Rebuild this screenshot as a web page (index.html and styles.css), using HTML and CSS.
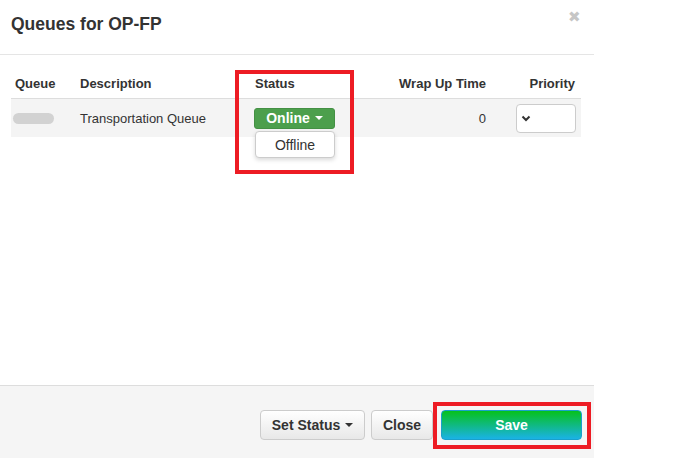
FILE: index.html
```html
<!DOCTYPE html>
<html>
<head>
<meta charset="utf-8">
<link rel="stylesheet" href="styles.css">
</head>
<body>
<div class="modal">
  <div class="modal-header">
    <h4 class="title">Queues for OP-FP</h4>
    <span class="close-x">&#x2716;</span>
  </div>
  <div class="modal-body">
    <div class="grid head">
      <div class="c c1">Queue</div>
      <div class="c c2">Description</div>
      <div class="c c3">Status</div>
      <div class="c c4">Wrap Up Time</div>
      <div class="c c5">Priority</div>
    </div>
    <div class="grid row">
      <div class="c c1"><span class="pill"></span></div>
      <div class="c c2">Transportation Queue</div>
      <div class="c c3 status-cell">
        <span class="btn-online">Online <span class="caret white"></span></span>
        <div class="dropdown">Offline</div>
        <div class="hl hl-status"></div>
      </div>
      <div class="c c4">0</div>
      <div class="c c5">
        <span class="select">
          <svg width="10" height="7" viewBox="0 0 10 7"><path d="M1.5 1.5 L5 5 L8.5 1.5" fill="none" stroke="#333" stroke-width="2"/></svg>
        </span>
      </div>
    </div>
  </div>
  <div class="modal-footer">
    <button class="btn btn-default btn-status">Set Status <span class="caret"></span></button>
    <button class="btn btn-default btn-close">Close</button>
    <span class="save-wrap">
      <button class="btn btn-save">Save</button>
      <span class="hl hl-save"></span>
    </span>
  </div>
</div>
</body>
</html>
```
FILE: styles.css
```css
html, body {
  margin: 0;
  padding: 0;
  background: #fff;
}
body {
  font-family: "Liberation Sans", Arial, sans-serif;
  font-size: 13px;
  color: #333;
  width: 683px;
  height: 458px;
  overflow: hidden;
}
.modal {
  width: 594px;
  height: 458px;
  display: flex;
  flex-direction: column;
  background: #fff;
}
.modal-header {
  height: 54px;
  border-bottom: 1px solid #e5e5e5;
  display: flex;
  align-items: flex-start;
  justify-content: space-between;
  padding: 0 13px 0 11px;
}
.title {
  margin: 14px 0 0 0;
  font-size: 17.5px;
  font-weight: bold;
  line-height: 20px;
  color: #333;
}
.close-x {
  margin-top: 9px;
  font-size: 15px;
  color: #c6c6c6;
  line-height: 16px;
}
.modal-body {
  flex: 1;
  padding: 13px 13px 0 11px;
}
.grid {
  display: grid;
  grid-template-columns: 65px 175px 120px 120px 90px;
  width: 570px;
}
.head {
  height: 30px;
  border-bottom: 1px solid #ddd;
  font-weight: bold;
  align-items: center;
}
.row {
  height: 38px;
  background: #f4f4f4;
  align-items: center;
}
.c {
  padding: 0 4px;
}
.c4 {
  text-align: right;
  padding-right: 5px;
}
.c5 {
  text-align: right;
  padding-right: 5px;
  display: flex;
  justify-content: flex-end;
}
.head .c5 {
  padding-right: 6px;
}
.pill {
  display: block;
  width: 41px;
  height: 11px;
  margin-left: -2px;
  border-radius: 6px;
  background: #d2d2d2;
}
.status-cell {
  position: relative;
  height: 38px;
  display: flex;
  align-items: center;
}
.btn-online {
  display: inline-flex;
  align-items: center;
  justify-content: center;
  gap: 5px;
  width: 81px;
  height: 21px;
  margin-left: -1px;
  box-sizing: border-box;
  background: #4c9f4c;
  border: 1px solid #449044;
  border-radius: 3px;
  color: #fff;
  font-weight: bold;
  font-size: 14px;
}
.caret {
  display: inline-block;
  width: 0;
  height: 0;
  border-left: 4px solid transparent;
  border-right: 4px solid transparent;
  border-top: 4px solid #333;
  vertical-align: middle;
}
.caret.white {
  border-top-color: #fff;
}
.dropdown {
  position: absolute;
  left: 4px;
  top: 32px;
  width: 80px;
  height: 27px;
  box-sizing: border-box;
  background: #fff;
  border: 1px solid #ccc;
  border-radius: 4px;
  box-shadow: 0 2px 4px rgba(0,0,0,0.15);
  font-size: 14px;
  display: flex;
  align-items: center;
  justify-content: center;
  z-index: 2;
}
.hl {
  position: absolute;
  border: 4px solid #ed1c24;
  box-sizing: border-box;
  pointer-events: none;
}
.hl-status {
  left: -16px;
  top: -29px;
  width: 119px;
  height: 104px;
}
.select {
  width: 60px;
  height: 29px;
  box-sizing: border-box;
  background: #fff;
  border: 1px solid #ccc;
  border-radius: 4px;
  display: flex;
  align-items: center;
  padding-left: 4px;
}
.modal-footer {
  height: 73px;
  border-top: 1px solid #ddd;
  background: #f5f5f5;
  display: flex;
  justify-content: flex-end;
  align-items: flex-start;
  padding: 24px 12px 0 0;
  box-sizing: border-box;
}
.btn {
  font-family: "Liberation Sans", Arial, sans-serif;
  font-size: 14px;
  font-weight: bold;
  height: 30px;
  border-radius: 4px;
  box-sizing: border-box;
  padding: 0;
  white-space: nowrap;
  cursor: pointer;
  display: inline-flex;
  align-items: center;
  justify-content: center;
  gap: 5px;
}
.btn-default {
  color: #333;
  background: linear-gradient(#ffffff, #e8e8e8);
  border: 1px solid #ccc;
}
.btn-status {
  width: 105px;
  margin-right: 6px;
}
.btn-close {
  width: 62px;
  margin-right: 8px;
}
.save-wrap {
  position: relative;
  display: inline-block;
}
.btn-save {
  width: 141px;
  color: #fff;
  border: 1px solid #1aa0cc;
  background: linear-gradient(#06c11b, #1ab2e6);
  display: flex;
}
.hl-save {
  left: -8px;
  top: -8px;
  width: 158px;
  height: 47px;
}
```
